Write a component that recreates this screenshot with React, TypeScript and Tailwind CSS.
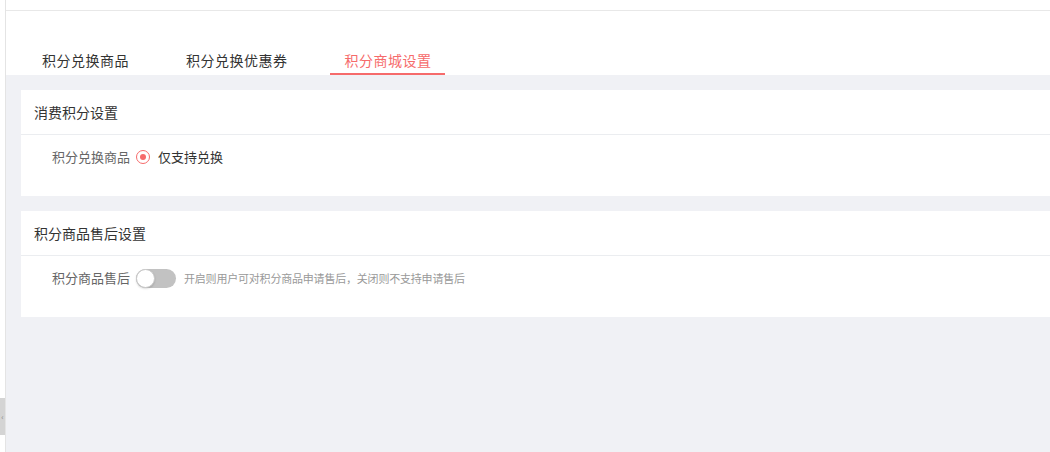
import { useState } from 'react';

const tabs = ['积分兑换商品', '积分兑换优惠券', '积分商城设置'];

function SettingCard({ title, children }: { title: string; children: React.ReactNode }) {
  return (
    <section className="bg-white">
      <div className="h-[45px] flex items-center pl-[13px] text-[14px] text-[#333] border-b border-[#ebedf0]">
        {title}
      </div>
      <div className="pt-[12px] pb-[29px] pl-[31px]">{children}</div>
    </section>
  );
}

export default function App() {
  const [active, setActive] = useState(2);
  const [afterSale, setAfterSale] = useState(false);

  return (
    <div
      className="relative flex w-[1050px] h-[452px] overflow-hidden bg-white"
      style={{ fontFamily: '"Noto Sans CJK SC", "Noto Sans", sans-serif' }}
    >
      {/* Collapsed sidebar */}
      <aside className="w-[6px] shrink-0 border-r border-[#e4e4e4] bg-white" />
      <button className="absolute left-0 top-[398px] w-[5px] h-[37px] bg-[#d4d4d4] flex items-center justify-center text-[8px] leading-none text-[#888] overflow-hidden">
        ‹
      </button>

      <main className="flex-1 flex flex-col min-w-0">
        {/* Top bar */}
        <div className="h-[11px] shrink-0 border-b border-[#e8e8e8]" />

        {/* Tabs */}
        <nav className="h-[64px] shrink-0 flex items-end pl-[21px] gap-[29px] bg-white">
          {tabs.map((tab, i) => (
            <button
              key={tab}
              onClick={() => setActive(i)}
              className={
                i === active
                  ? 'pl-[15px] pr-[13px] pb-[3px] text-[14px] leading-[20px] tracking-[0.5px] text-[#f66b6b] border-b-2 border-[#f66b6b]'
                  : 'pl-[15px] pr-[13px] pb-[3px] text-[14px] leading-[20px] tracking-[0.5px] text-[#333] border-b-2 border-transparent'
              }
            >
              {tab}
            </button>
          ))}
        </nav>

        {/* Content */}
        <div className="flex-1 bg-[#f0f1f5] pt-[15px] pl-[15px] flex flex-col gap-[15px]">
          <SettingCard title="消费积分设置">
            <div className="flex items-center h-[20px] text-[13px]">
              <span className="w-[84px] text-[#666]">积分兑换商品</span>
              <span className="w-[14px] h-[14px] rounded-full border border-[#f66b6b] flex items-center justify-center">
                <span className="w-[6px] h-[6px] rounded-full bg-[#f66b6b]" />
              </span>
              <span className="ml-[8px] text-[#333]">仅支持兑换</span>
            </div>
          </SettingCard>

          <SettingCard title="积分商品售后设置">
            <div className="flex items-center h-[20px] text-[13px]">
              <span className="w-[84px] text-[#666]">积分商品售后</span>
              <button
                onClick={() => setAfterSale(!afterSale)}
                className={
                  afterSale
                    ? 'relative w-[40px] h-[19px] rounded-full bg-[#f66b6b]'
                    : 'relative w-[40px] h-[19px] rounded-full bg-[#c2c2c2]'
                }
              >
                <span
                  className={
                    afterSale
                      ? 'absolute top-0 left-[21px] w-[19px] h-[19px] rounded-full bg-white border border-[#d0d0d0]'
                      : 'absolute top-0 left-0 w-[19px] h-[19px] rounded-full bg-white border border-[#c9c9c9] shadow-[0_1px_2px_rgba(0,0,0,0.15)]'
                  }
                />
              </button>
              <span className="ml-[8px] text-[11px] tracking-[-0.2px] text-[#999]">
                开启则用户可对积分商品申请售后，关闭则不支持申请售后
              </span>
            </div>
          </SettingCard>
        </div>
      </main>
    </div>
  );
}
